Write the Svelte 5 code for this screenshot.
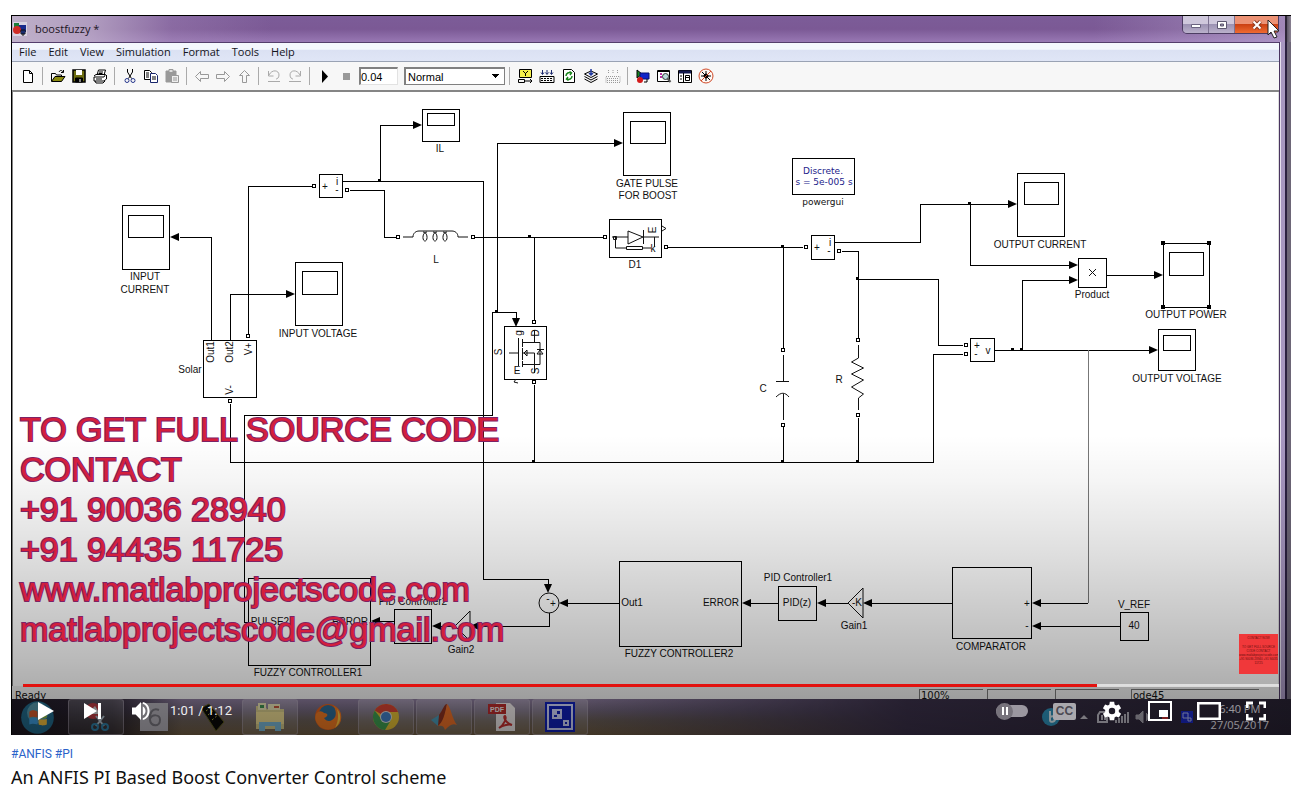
<script>
  let played = 85.5;
  let stopTime = '0.04';
  let mode = 'Normal';

  const MENUS = ['File', 'Edit', 'View', 'Simulation', 'Format', 'Tools', 'Help'];

  const CONTACT = [
    'TO GET FULL SOURCE CODE',
    'CONTACT',
    '+91 90036 28940',
    '+91 94435 11725',
    'www.matlabprojectscode.com',
    'matlabprojectscode@gmail.com',
  ];

  // Toolbar icons, grouped as they sit between the separators
  const FILE_TOOLS = [['new'], ['open', 'save', 'print'], ['cut', 'copy', 'paste'], ['back', 'forward', 'up'], ['undo', 'redo']];
  const BUILD_TOOLS = ['target', 'build', 'refresh', 'library', 'buildoff'];
  const VIEW_TOOLS = ['browser', 'explorer', 'model', 'debug'];

  // Scopes: outer frame, inner screen
  const SCOPES = [
    { x: 122, y: 205, w: 47, h: 64, sx: 128, sy: 215, sw: 35, sh: 22 },
    { x: 295, y: 262, w: 47, h: 63, sx: 302, sy: 271, sw: 35, sh: 23 },
    { x: 422, y: 109, w: 37, h: 32, sx: 427, sy: 113, sw: 27, sh: 12 },
    { x: 623, y: 112, w: 47, h: 63, sx: 630, sy: 121, sw: 35, sh: 22 },
    { x: 1017, y: 173, w: 47, h: 63, sx: 1024, sy: 182, sw: 34, sh: 22 },
    { x: 1163, y: 243, w: 46, h: 64, sx: 1169, sy: 252, sw: 34, sh: 23 },
    { x: 1158, y: 329, w: 37, h: 41, sx: 1163, sy: 335, sw: 27, sh: 15 },
  ];

  const BLOCKS = [
    [203, 340, 53, 57], [319, 174, 23, 23], [504, 326, 42, 53], [609, 219, 52, 38],
    [792, 158, 62, 36], [811, 235, 23, 24], [970, 338, 24, 23], [1078, 258, 28, 29],
    [248, 578, 122, 87], [394, 609, 37, 34], [619, 561, 122, 85], [778, 586, 38, 34],
    [952, 567, 79, 71], [1120, 612, 28, 28],
  ];

  const WIRES = [
    'M180 237H211V340', 'M230 340V294H286', 'M248 334V186H312', 'M343 181H483V579H548V584',
    'M380 181V125H413', 'M350 190H384V237H396', 'M475 237H603', 'M534 237V320',
    'M614 143H497V312M516 318V312H492V415H244V622H248', 'M534 385V462', 'M230 404V462H933V354H963',
    'M668 247H803', 'M783 247V348M783 427V462', 'M835 242H920V204H1008M970 204V265H1070',
    'M842 251H858V338M858 279H938V345H963M858 418V462', 'M995 350H1150M1022 350V280H1070',
    'M1107 275H1154', 'M1088 603H1040', 'M1120 626H1040', 'M952 603H871', 'M848 603H825',
    'M778 603H750', 'M619 603H567', 'M549 613V626H478', 'M455 626H440', 'M394 621H380',
  ];

  // [x, y, direction in degrees], tip at x,y
  const ARROWS = [
    [170, 237, 180], [295, 294, 0], [422, 125, 0], [623, 143, 0], [516, 327, 90], [1017, 204, 0],
    [1078, 265, 0], [1078, 280, 0], [1163, 275, 0], [1158, 350, 0], [1032, 603, 180], [1032, 626, 180],
    [863, 603, 180], [817, 603, 180], [742, 603, 180], [559, 603, 180], [548, 593, 90],
    [470, 626, 180], [432, 626, 180], [371, 621, 180],
  ];

  const PORTS = [
    [248, 336], [314, 186], [347, 190], [398, 237], [473, 237], [605, 237], [534, 322], [534, 382],
    [230, 401], [666, 247], [806, 247], [839, 251], [783, 350], [783, 425], [858, 340], [858, 415],
    [966, 345], [966, 354],
  ];

  const NODES = [
    [380, 181], [530, 237], [497, 312], [534, 462], [783, 247], [783, 462], [858, 279], [858, 462],
    [970, 204], [1013, 350], [1022, 350],
  ];

  // selection handles round the OUTPUT POWER scope
  const HANDLES = [[1163, 243], [1209, 243], [1163, 307], [1209, 307]];

  const LABELS = [
    [145, 280, 'INPUT'], [145, 293, 'CURRENT'], [318, 337, 'INPUT VOLTAGE'], [440, 152, 'IL'],
    [647, 187, 'GATE PULSE'], [648, 199, 'FOR BOOST'], [1040, 248, 'OUTPUT CURRENT'],
    [1186, 318, 'OUTPUT POWER'], [1177, 382, 'OUTPUT VOLTAGE'], [1092, 298, 'Product'],
    [190, 373, 'Solar'], [635, 268, 'D1'], [436, 263, 'L'], [763, 392, 'C'], [839, 383, 'R'],
    [308, 676, 'FUZZY CONTROLLER1'], [679, 657, 'FUZZY CONTROLLER2'], [413, 605, 'PID Controller2'],
    [798, 581, 'PID Controller1'], [461, 653, 'Gain2'], [854, 629, 'Gain1'], [991, 650, 'COMPARATOR'],
    [1134, 608, 'V_REF'], [1134, 629, '40'], [270, 625, 'PULSE2'], [350, 625, 'ERROR'],
    [632, 606, 'Out1'], [721, 606, 'ERROR'], [797, 606, 'PID(z)'], [325, 190, '+'], [337, 185, 'i'],
    [337, 193, '-'], [817, 251, '+'], [830, 246, 'i'], [829, 254, '-'], [977, 349, '+'], [976, 357, '-'],
    [988, 354, 'v'], [1027, 607, '+'], [1027, 629, '-'], [653, 252, 'k'], [553, 607, '+'], [548, 602, '-'],
    [857, 606, '-K'],
  ];
</script>

{#snippet toolIcon(id)}
  <svg width="16" height="16" viewBox="0 0 16 16" fill="none" stroke="#000" aria-hidden="true">
    {#if id === 'new'}
      <path d="M3.500 2.500h6l3 3v9h-9zM9.500 2.500v3h3" fill="#fff" />
    {:else if id === 'open'}
      <path d="M1.500 13V5.500h4l1 1.500h5v2M9 4c1-2 3-2 4 0M13.500 2v2.500h-2.500" />
      <path d="M1.500 13.500L5 8.500h10l-3.500 5z" fill="#8a8a10" />
    {:else if id === 'save'}
      <path d="M2 2h12v12H2z" fill="#6e6e10" stroke-width="1.500" /><path d="M5 2h6v5H5z" fill="#fff" stroke="none" /><path d="M4.500 10h7v4h-7z" fill="#000" /><path d="M9 11v3" stroke="#fff" />
    {:else if id === 'print'}
      <path d="M5 7l1.500-5h7L12 7M2 8l2-1.500h9.500L12 9H2v4h10l2.500-2V7M3 13l1 2h7l2-2" fill="#fff" /><path d="M7 4h4M6.500 5.500h4M4 11h6" />
    {:else if id === 'cut'}
      <path d="M5.500 1v3l4 6.500M10.500 1v3l-4 6.500" /><circle cx="5" cy="12.500" r="2" stroke="#26368c" /><circle cx="11" cy="12.500" r="2" stroke="#26368c" />
    {:else if id === 'copy'}
      <path d="M1.500 2.500h5l2 2v7h-7z" fill="#fff" /><path d="M7.500 5.500h5l2 2v7h-7z" fill="#fff" stroke="#17256b" /><path d="M3 5h3M3 7h3M3 9h3M9 9h4M9 11h4" />
    {:else if id === 'paste'}
      <path d="M2 3h10v11H2z" fill="#999" stroke="#999" /><path d="M5 1.500h4v3H5z" fill="#ddd" stroke="#999" /><path d="M7.500 7.500h7v7h-7zM9 10h4M9 12h4" fill="#eee" stroke="#999" />
    {:else if id === 'back'}
      <path d="M1.500 8.500l5-5v3h8v4h-8v3z" stroke="#999" />
    {:else if id === 'forward'}
      <path d="M14.500 8.500l-5-5v3h-8v4h8v3z" stroke="#999" />
    {:else if id === 'up'}
      <path d="M8.500 2.500l-5 5h3v7h4v-7h3z" stroke="#999" />
    {:else if id === 'undo'}
      <path d="M2.500 3v5h5M3 7c3-6 10-5 10 0 0 3-2 4-3 4M2 13.500h12" stroke="#aaa" />
    {:else if id === 'redo'}
      <path d="M13.500 3v5h-5M13 7C10 1 3 2 3 7c0 3 2 4 3 4M2 13.500h12" stroke="#aaa" />
    {:else if id === 'play'}
      <path d="M5 2l6 6.500L5 15z" fill="#000" stroke="none" />
    {:else if id === 'stop'}
      <path d="M5 5h7v7H5z" fill="#999" stroke="none" />
    {:else if id === 'target'}
      <path d="M2.500 1.500h12v8h-12z" fill="#f5f04c" /><path d="M6 3l2.500 2.500L11 3M8.500 5v3M1.500 11.500h6v3h-6zM8 13h7M13 11l2 2-2 2" />
    {:else if id === 'build'}
      <path d="M3.500 2v4M8 2v4M12.500 2v4M2 4.500l1.500 2L5 4.500M6.500 4.500L8 6.500l1.500-2M11 4.500l1.500 2 1.500-2" stroke="#1c2a6e" /><path d="M1 8.500h14v6H1z" stroke-width="1" /><path d="M2 10.500h12M2 12.500h12" stroke-dasharray="2 1" />
    {:else if id === 'buildoff'}
      <path d="M3.500 2v4M8 2v4M12.500 2v4M1 8.500h14v6H1zM2 10.500h12M2 12.500h12" stroke="#999" stroke-dasharray="1 1" />
    {:else if id === 'refresh'}
      <path d="M2.500 1.500h8l3 3v10h-11z" fill="#fff" /><path d="M5 8c0-3 3-4 5-3M8.500 3.500L10.500 5 9 7M11 8c0 3-3 4-5 3M7.500 12.500L5.500 11 7 9" stroke="#18851b" stroke-width="1.500" />
    {:else if id === 'library'}
      <path d="M1.500 6L8 9.500 14.500 6 8 3zM1.500 8.500L8 12l6.500-3.500M1.500 11L8 14.500l6.500-3.500" /><path d="M8 1v6M6 5l2 2 2-2" stroke="#2039a0" stroke-width="1.500" />
    {:else if id === 'browser'}
      <path d="M2 2l5 4-5 4z" fill="#16861f" stroke="#000" /><path d="M5 5h9v6H5z" fill="#1024c8" stroke="#061070" /><circle cx="5" cy="12" r="3" fill="#d41a1a" stroke="none" /><path d="M9 14h3v-3" />
    {:else if id === 'explorer'}
      <path d="M1.500 2.500h12v11h-12z" fill="#fff" /><path d="M2 3.500h12" stroke-width="1" /><path d="M4 6h2M4 9h2" stroke="#b52fa0" stroke-width="2" /><circle cx="9.500" cy="8.500" r="3" fill="#b9d8da" stroke="#333" /><path d="M11.500 10.500l3 3.500" stroke="#555" stroke-width="2" />
    {:else if id === 'model'}
      <path d="M1.500 2.500h13v12h-13z" fill="#fff" /><path d="M2 4h12" stroke="#13194f" stroke-width="3" /><path d="M6.500 5v9M3 8h2M3 11h2M8.500 7.500h4v5h-4zM9 9.500h3" />
    {:else if id === 'debug'}
      <circle cx="8" cy="8" r="7" stroke="#d04a28" fill="#fff8f4" /><path d="M8 3v10M3 8h10M4 4l8 8M12 4l-8 8" /><circle cx="8" cy="8" r="2" fill="#000" /><path d="M3 13L13 3" stroke="#d04a28" />
    {/if}
  </svg>
{/snippet}

{#snippet tool(id)}
  <button class="tool" aria-label={id}>{@render toolIcon(id)}</button>
{/snippet}

<main class="page">
  <section class="player">
    <header class="titlebar">
      <svg width="14" height="14" viewBox="0 0 14 14" aria-hidden="true">
        <path d="M0 0h14v14H0z" fill="#d9d3e2" /><path d="M1 1h5v6H1z" fill="#1d7d3a" /><path d="M6 3h7v7H6z" fill="#182a8c" /><circle cx="4" cy="8" r="4" fill="#cf2b25" /><path d="M8 12V8h4v4zM10 8v6" fill="#2148c8" stroke="#111" />
      </svg>
      <span class="doc">boostfuzzy *</span>
      <div class="winbtns">
        <button aria-label="Minimize"><svg width="12" height="10" viewBox="0 0 12 10"><path d="M1.500 4.500h9v3h-9z" fill="#fff" stroke="#6b6480" /></svg></button>
        <button aria-label="Restore"><svg width="12" height="10" viewBox="0 0 12 10"><path d="M1.500 1.500h9v7h-9z" fill="#fff" stroke="#5d5770" /><path d="M4.500 4h3v2h-3z" fill="#9a93ab" stroke="#5d5770" /></svg></button>
        <button class="close" aria-label="Close"><svg width="12" height="10" viewBox="0 0 12 10"><path d="M2.500 1.500l7 7M9.500 1.500l-7 7" stroke="#8c3b22" stroke-width="4" /><path d="M2.500 1.500l7 7M9.500 1.500l-7 7" stroke="#fff" stroke-width="2" /></svg></button>
      </div>
    </header>

    <div class="window">
      <nav class="menubar">
        {#each MENUS as m}<button>{m}</button>{/each}
      </nav>

      <div class="toolbar">
        {#each FILE_TOOLS as group}
          {#each group as id}{@render tool(id)}{/each}
          <i class="sep"></i>
        {/each}
        {@render tool('play')}
        {@render tool('stop')}
        <input class="stoptime" aria-label="Stop time" bind:value={stopTime} />
        <select class="mode" aria-label="Simulation mode" bind:value={mode}>
          <option>Normal</option>
          <option>Accelerator</option>
        </select>
        <i class="sep"></i>
        <div class="loose">{#each BUILD_TOOLS as id}{@render tool(id)}{/each}</div>
        <i class="sep"></i>
        {#each VIEW_TOOLS as id}{@render tool(id)}{/each}
      </div>

      <div class="canvas">
        <svg class="model" viewBox="13 92 1265 594" role="img" aria-label="boostfuzzy model">
          <g class="lines">
            {#each WIRES as d}<path {d} />{/each}
            <path class="faint" d="M1088 350V603" />
            {#each BLOCKS as [x, y, w, h]}<rect {x} {y} width={w} height={h} />{/each}
            {#each SCOPES as s}
              <rect x={s.x} y={s.y} width={s.w} height={s.h} />
              <rect x={s.sx} y={s.sy} width={s.sw} height={s.sh} />
            {/each}
            {#each PORTS as [x, y]}<rect class="port" x={x - 2} y={y - 2} width="3" height="3" />{/each}
          </g>
          {#each NODES as [x, y]}<rect x={x - 2} y={y - 2} width="3" height="3" />{/each}
          {#each HANDLES as [x, y]}<rect x={x - 2} y={y - 2} width="4" height="4" />{/each}
          {#each ARROWS as [x, y, a]}
            <path d="M0 0L-9 -4V4Z" transform="translate({x} {y}) rotate({a})" />
          {/each}

          <g class="symbols">
            <!-- inductor -->
            <path d="M403 237h10c0-4 3-6 6-6h33c3 0 6 2 6 6h10M423 232c5 0 5 9 2 9s-3-9 2-9M433 232c5 0 5 9 2 9s-3-9 2-9M443 232c5 0 5 9 2 9s-3-9 2-9" />
            <!-- diode with snubber -->
            <path d="M612 237h16M644 237h15M628 231v13l15-7zM643.500 230v14M615.500 237v11h11M643 248h8M654.500 237v10M626.500 246.500h16v3h-16zM613.500 236.500h3v3h-3zM662 226l4 2.500-4 2.500" />
            <!-- mosfet -->
            <path d="M509 353h10M518.500 338v28M522.500 339v8M522.500 348v12M522.500 361v6M523 342.500h17v22h-17M534.500 330v12M523 353h11.500v20M524 353l3-3v6zM537 354l3-4 3 4zM537 349.500h7M516 379l-2 3 4 1" />
            <!-- capacitor -->
            <path d="M783.500 355v26M776 381.500h13M776 397c5-5 9-5 13 0M783.500 394v26" />
            <!-- resistor -->
            <path d="M858.500 345v13l-7 4 12 6-12 6 12 6-12 7 12 7-5 4v12" />
            <!-- product -->
            <path d="M1089 269l7 7M1096 269l-7 7" />
            <circle cx="549" cy="603" r="10" />
            <path d="M848 603l15-15v30zM455 626l15-15v30z" />
          </g>

          <g class="labels">
            {#each LABELS as [x, y, text]}<text {x} {y}>{text}</text>{/each}
            <text transform="translate(214 352) rotate(-90)">Out1</text>
            <text transform="translate(233 352) rotate(-90)">Out2</text>
            <text transform="translate(252 349) rotate(-90)">V+</text>
            <text transform="translate(233 390) rotate(-90)">V-</text>
            <text transform="translate(656 230) rotate(-90)">E</text>
            <text transform="translate(502 352) rotate(-90)">S</text>
            <text transform="translate(522 333) rotate(-90)">g</text>
            <text transform="translate(539 333) rotate(-90)">D</text>
            <text transform="translate(539 371) rotate(-90)">S</text>
            <text x="517" y="374">E</text>
          </g>
          <g class="gui">
            <text x="823" y="174">Discrete.</text>
            <text x="824" y="185">s = 5e-005 s</text>
            <text class="name" x="823" y="205">powergui</text>
          </g>
        </svg>
      </div>

      <footer class="status">
        <span class="ready">Ready</span>
        <span class="cell">100%</span>
        <span class="cell"></span>
        <span class="cell"></span>
        <span class="cell solver">ode45</span>
      </footer>
    </div>

    <div class="taskbar">
      <svg class="orb" width="35" height="35" viewBox="0 0 30 30" aria-hidden="true">
        <circle cx="15" cy="15" r="14" fill="#226a8b" /><circle cx="15" cy="11" r="9" fill="#5595a8" /><path d="M8 10c3-2 5-1 7 0v5c-3-1-5-1-7 0z" fill="#d3582b" /><path d="M16 10c3 1 4 1 7 0v5c-3 1-4 1-7 0z" fill="#86b544" /><path d="M8 16c3-1 5-1 7 0v5c-3-1-5-1-7 0z" fill="#3d9bdb" /><path d="M16 16c3 1 4 1 7 0v5c-3 1-4 1-7 0z" fill="#eebc3d" />
      </svg>
      <div class="task framed">
        <svg width="28" height="32" viewBox="0 0 28 30"><circle cx="11" cy="9" r="8" fill="#b83a40" /><path d="M5 12l8-8 5 8z" fill="#ccc" /><path d="M14 14l8 10M22 14l-8 10" stroke="#aebfca" stroke-width="2" /><circle cx="13" cy="25" r="3" fill="none" stroke="#2f7fa6" stroke-width="2" /><circle cx="23" cy="25" r="3" fill="none" stroke="#2f7fa6" stroke-width="2" /></svg>
      </div>
      <div class="task">
        <svg width="28" height="30" viewBox="0 0 28 30"><path d="M0 1h28v28H0z" fill="#b3b0b8" /><path d="M19 8c-7-3-10 4-9 10 1 7 10 7 10 0 0-6-8-6-10-1" fill="none" stroke="#77757d" stroke-width="2" /></svg>
      </div>
      <div class="task">
        <svg width="28" height="30" viewBox="0 0 28 30"><path d="M3 6l8-4 15 18-8 9z" fill="#0a0a08" stroke="#5e5c1c" /><path d="M8 9l4-3M10 13l6-5M14 18l6-5" stroke="#b0a82f" stroke-dasharray="2 2" /></svg>
      </div>
      <div class="task framed">
        <svg width="32" height="32" viewBox="0 0 32 32"><path d="M2 5h9l2 3h17v20H2z" fill="#d4c98a" /><path d="M4 2h8v7H4zM14 3h12v6H14z" fill="#e6e1b3" /><path d="M6 4h4v3H6z" fill="#3f9150" /><path d="M20 5h5v2h-5z" fill="#c25339" /><path d="M2 11h28v12H2z" fill="#ecdb92" /><path d="M5 30V21h22v9h-6v-5H11v5z" fill="#7ab8d6" /></svg>
      </div>
      <div class="task">
        <svg width="30" height="30" viewBox="0 0 30 30"><circle cx="15" cy="15" r="13" fill="#e0611d" /><circle cx="15" cy="12" r="9" fill="#2d6b94" /><path d="M3 12c3-4 6-3 8-1 5 0 4 4 0 5 3 5 9 3 11-1 2-4 0-9-2-12 8 4 10 11 7 18-5 8-18 9-23 0-2-3-2-6-1-9z" fill="#f07a22" /><path d="M24 7c5 6 4 14-2 19 3-6 4-12 2-19z" fill="#fbc940" /></svg>
      </div>
      <div class="task framed">
        <svg width="30" height="30" viewBox="0 0 30 30"><circle cx="15" cy="15" r="13" fill="#e3be35" /><path d="M15 15L3.700 8.500A13 13 0 0 1 27 10H15z" fill="#d64334" /><path d="M3.700 8.500A13 13 0 0 0 14 28l6-10-9 0z" fill="#3f9e51" /><circle cx="15" cy="15" r="6" fill="#ddd" /><circle cx="15" cy="15" r="5" fill="#427fc6" /></svg>
      </div>
      <div class="task framed">
        <svg width="30" height="30" viewBox="0 0 30 30"><path d="M2 18l8-5 5 5-6 6z" fill="#4b9cb9" /><path d="M10 13C14 8 15 2 18 2l-3 18-6 4z" fill="#8c3220" /><path d="M18 2c4 3 5 15 10 21-5-2-7 0-12 5-1-4-3-5-7-4 5-4 7-12 9-22z" fill="#ec7028" /></svg>
      </div>
      <div class="task framed">
        <svg width="30" height="32" viewBox="0 0 30 32"><path d="M9 2h14l5 5v23H9z" fill="#eee9e9" /><path d="M1 3h18v10H1z" fill="#b92c2c" /><text class="pdf" x="10" y="11">PDF</text><path d="M12 27c5-3 8-10 6-12-2 0 0 7 7 9-3-1-9 0-13 3z" fill="none" stroke="#c43030" stroke-width="2" /></svg>
      </div>
      <div class="task framed">
        <svg width="30" height="32" viewBox="0 0 30 32"><path d="M0 1h30v30H0z" fill="#1020b8" /><path d="M3 4h24v24H3z" fill="none" stroke="#d0d5fa" stroke-width="2" /><path d="M7 8h10v10H7zM18 19h6v6h-6z" fill="#d0d5fa" /><path d="M12 10h3v3h-3zM9 14h3v2H9zM20 21h2v2h-2z" fill="#1020b8" /></svg>
      </div>
      <div class="tray">
        <svg width="20" height="22" viewBox="0 0 20 22"><circle cx="10" cy="11" r="9" fill="#2f92bb" /><path d="M9 5v9c0 3 5 2 5-1 0-4-5-3-5-1" fill="none" stroke="#dcebf2" stroke-width="2" /></svg>
        <svg class="caret" width="10" height="6" viewBox="0 0 10 6"><path d="M1 5l4-4 4 4z" fill="#c5c2cb" /></svg>
        <svg width="12" height="14" viewBox="0 0 12 14"><path d="M3 2h7v10H1V5zM5 5v5M8 4v6" fill="none" stroke="#c0bdc8" stroke-width="2" /></svg>
        <svg width="14" height="12" viewBox="0 0 14 12"><path d="M1 9v3M4 7v5M7 5v7M10 3v9M13 1v11" stroke="#b5b2bd" stroke-width="2" /></svg>
        <svg width="40" height="14" viewBox="0 0 40 14"><path d="M1 5h3l4-4v12L4 9H1zM11 3c3 3 3 5 0 8" fill="#a5a2ad" stroke="#a5a2ad" /><path d="M27 3h6v8h-6" fill="#c93336" /></svg>
        <svg width="12" height="12" viewBox="0 0 12 12"><path d="M0 0h12v12H0z" fill="#1a28c4" /><path d="M2 2h5v5H2zM7 7h3v3H7z" fill="none" stroke="#b0b8f0" /></svg>
        <div class="clock"><span>6:40 PM</span><span>27/05/2017</span></div>
      </div>
    </div>

    <div class="shade"></div>

    <div class="contact">
      {#each CONTACT as line}<p>{line}</p>{/each}
    </div>

    <div class="card">
      <p>CONTACT NOW</p>
      <p>TO GET FULL SOURCE CODE CONTACT</p>
      <p>www.matlabprojectscode.com</p>
      <p>+91 90036 28940 +91 94435 11725</p>
    </div>

    <div class="controls">
      <input class="seek" type="range" min="0" max="100" step="0.5" aria-label="Seek" bind:value={played} style="--played:{played}%" />
      <div class="row">
        <button class="play" aria-label="Play"><svg width="18" height="20" viewBox="0 0 18 20"><path d="M1 1l16 9-16 9z" /></svg></button>
        <button class="next" aria-label="Next"><svg width="18" height="18" viewBox="0 0 18 18"><path d="M0 1l13 8-13 8zM14 1h3v16h-3z" /></svg></button>
        <button class="vol" aria-label="Mute"><svg width="20" height="18" viewBox="0 0 20 20"><path d="M0 6h4l6-6v20l-6-6H0zM12 5c4 2 4 8 0 10zM12 0c10 2 10 18 0 20v-2c7-2 7-14 0-16z" /></svg></button>
        <span class="time">1:01 / 1:12</span>
        <div class="right">
          <button class="auto" aria-label="Autoplay"><span class="knob"></span></button>
          <button class="cc" aria-label="Subtitles">CC</button>
          <button aria-label="Settings"><svg width="22" height="22" viewBox="0 0 24 24"><path fill-rule="evenodd" d="M19.400 13c.1-.7.1-1.300 0-2l2.500-2-2.400-4.200-3 1.200-1.700-1L14.400 2H9.600l-.4 3-1.700 1-3-1.200L2.100 9l2.500 2c-.1.700-.1 1.300 0 2l-2.500 2 2.400 4.200 3-1.200 1.700 1 .4 3h4.800l.4-3 1.700-1 3 1.200 2.400-4.200zM12 15.500a3.500 3.500 0 1 1 0-7 3.500 3.500 0 0 1 0 7z" /></svg></button>
          <button aria-label="Miniplayer"><svg width="24" height="20" viewBox="0 0 24 20"><path d="M1 1h22v18H1z" fill="none" stroke="#fff" stroke-width="2" /><path d="M11 9h9v7h-9z" /></svg></button>
          <button aria-label="Theater mode"><svg width="24" height="18" viewBox="0 0 24 18"><path d="M1 1h22v16H1z" fill="none" stroke="#fff" stroke-width="3" /></svg></button>
          <button aria-label="Full screen"><svg width="20" height="20" viewBox="0 0 20 20"><path d="M1 7V2h6M13 2h6v5M19 13v5h-6M7 18H1v-5" fill="none" stroke="#fff" stroke-width="3" /></svg></button>
        </div>
      </div>
    </div>

    <svg class="cursor" width="13" height="20" viewBox="0 0 13 20" aria-hidden="true"><path d="M1 1v15l3-3 3 6 3-1-3-6h5z" fill="#fff" stroke="#222" /></svg>
  </section>

  <p class="tags"><a href="#anfis">#ANFIS</a> <a href="#pi">#PI</a></p>
  <h1>An ANFIS PI Based Boost Converter Control scheme</h1>
</main>

<style>
  :global(body) { margin: 0; background: #fff; }
  .page { padding: 15px 10px 0 11px; font-family: Roboto, "Liberation Sans", sans-serif; }
  p, h1 { margin: 0; }
  button { border: 0; padding: 0; background: none; font: inherit; color: inherit; }
  svg { display: block; }

  .player {
    position: relative; overflow: hidden;
    border-top: 1px solid #000; border-left: 1px solid #000; box-sizing: border-box;
    background: linear-gradient(90deg, #5c5666, #8b8394) right / 4px 100% no-repeat #2d2638;
  }

  .titlebar {
    display: flex; align-items: center; height: 26px; margin-right: 6px; padding-left: 1px;
    background:
      linear-gradient(90deg, #c3b6ccee 0, #bdacc9cc 80px, #a88cbb55 160px, transparent 260px),
      linear-gradient(90deg, transparent 85%, #b9a6cf99 100%),
      linear-gradient(#7c5c98, #7b5995 50%, #9878b4);
    font: 11px/16px "Open Sans", "Noto Sans", sans-serif; color: #1c1524;
  }
  .doc { margin-left: 8px; }
  .winbtns { display: flex; align-self: flex-start; margin-left: auto; margin-right: 6px; border: 1px solid #4d3d63; border-top: 0; border-radius: 0 0 5px 5px; overflow: hidden; }
  .winbtns button { display: grid; place-items: center; width: 26px; height: 17px; background: linear-gradient(#cfc8dc 50%, #9c92b3 50%, #bab1cb); border-right: 1px solid #7d7292; }
  .winbtns .close { width: 43px; background: linear-gradient(#ec9275 45%, #c83d10 45%, #ef6b32); border-right: 0; }

  .window {
    padding-right: 12px;
    background: linear-gradient(90deg, #4a3560 0 1px, #e6e0ee 1px 2px, #a797c0 2px 6px, #2b2040 6px 8px, #6d6677 8px) right / 12px 100% no-repeat;
  }
  .menubar {
    display: flex; align-items: center; gap: 12px; height: 18px; padding-left: 7px;
    border-top: 1px solid #543e6c; border-bottom: 1px solid #9aa3b4;
    background: linear-gradient(#f4f7fd 35%, #dbe1f3 40%, #e0e6f6);
    font: 11px/16px "Open Sans", "Noto Sans", sans-serif; color: #14141c;
  }
  .toolbar { display: flex; align-items: center; height: 28px; padding-left: 5px; background: #f7f7f7; border-bottom: 2px solid #858585; }
  .tool { display: grid; place-items: center; width: 21px; height: 22px; flex: none; }
  .sep { width: 1px; height: 18px; margin: 0 4px; background: #aaa; flex: none; }
  .loose { display: flex; gap: 1px; }
  .stoptime, .mode { box-sizing: border-box; height: 18px; border: 1px solid #e2e2e2; border-top: 2px solid #808080; border-left: 2px solid #808080; border-radius: 0; background: #fff; font: 11px/14px "Liberation Sans", sans-serif; color: #000; }
  .stoptime { width: 39px; margin: 0 6px 0 3px; padding: 0; }
  .mode {
    width: 101px; padding: 0 2px; appearance: none; border-color: #808080;
    background: linear-gradient(#000, #000) right 5px top 5px / 7px 1px no-repeat, linear-gradient(#000, #000) right 6px top 6px / 5px 1px no-repeat, linear-gradient(#000, #000) right 7px top 7px / 3px 1px no-repeat, linear-gradient(#000, #000) right 8px top 8px / 1px 1px no-repeat, #fff;
  }

  .canvas { border-left: 1px solid #858585; border-right: 1px solid #ddd; background: #fff; }
  .model { width: 100%; height: auto; }
  .lines { fill: none; stroke: #000; shape-rendering: crispEdges; }
  .faint { stroke: #777; }
  .port { fill: #fff; }
  .symbols { fill: none; stroke: #111; }
  .labels, .gui { text-anchor: middle; fill: #111; font: 10px "Liberation Sans", sans-serif; }
  .gui { font: 9px "DejaVu Sans", sans-serif; fill: #23238a; }
  .name { fill: #111; }

  .status { display: flex; align-items: flex-start; gap: 4px; height: 13px; padding-right: 20px; overflow: hidden; background: #efefef; font: 10px/12px "DejaVu Sans", sans-serif; color: #111; }
  .ready { margin: 4px auto 0 3px; }
  .cell { box-sizing: border-box; width: 64px; height: 12px; margin-top: 3px; padding-left: 1px; border-top: 1px solid #777; border-left: 1px solid #777; }
  .solver { width: 128px; margin-left: 8px; }

  .taskbar {
    position: relative; display: flex; align-items: center; gap: 2px; height: 36px; padding-left: 8px;
    background: linear-gradient(90deg, #17121dee 0, #17121dcc 100px, transparent 170px), linear-gradient(90deg, transparent 45%, #3a3049 70%, #282233 100%), linear-gradient(#8a7a9b, #74687f 30%, #6b5f58 60%, #715d42);
  }
  .orb { margin-right: 11px; }
  .task { display: grid; place-items: center; box-sizing: border-box; width: 56px; height: 36px; border: 1px solid transparent; }
  .framed { border-color: #b3a9bb77; border-radius: 3px; background: linear-gradient(#ffffff33, #ffffff11); }
  .tray { display: flex; align-items: center; gap: 6px; margin-left: auto; margin-right: 22px; }
  .caret { margin: 0 2px 0 12px; }
  .clock { display: flex; flex-direction: column; align-items: center; margin-left: 12px; font: 11px/16px "Open Sans", sans-serif; color: #f0edf5; }
  .pdf { font: bold 7px "Liberation Sans", sans-serif; fill: #eee; text-anchor: middle; }

  .shade {
    position: absolute; left: 0; right: 0; bottom: 0; height: 300px; pointer-events: none;
    background: linear-gradient(transparent, rgba(0,0,0,.04) 15%, rgba(0,0,0,.13) 40%, rgba(0,0,0,.28) 76%, rgba(0,0,0,.33) 86%, rgba(0,0,0,.42));
  }
  .contact {
    position: absolute; left: 8px; bottom: 86px;
    font: 34px/40px "Liberation Sans", Arial, sans-serif; color: #d41f3c; white-space: nowrap;
    -webkit-text-stroke: 2px #7c2266; paint-order: stroke fill;
  }
  .card { position: absolute; right: 13px; bottom: 61px; box-sizing: border-box; width: 39px; height: 40px; padding: 2px 0; overflow: hidden; background: #f0383a; font: 3px/4px "Liberation Sans", sans-serif; color: #6b1010; text-align: center; }
  .card p:first-child { margin-bottom: 5px; }

  .controls { position: absolute; left: 11px; right: 12px; bottom: 0; color: #fff; }
  .seek {
    display: block; width: 100%; height: 3px; margin: 0; appearance: none;
    background: linear-gradient(90deg, #e3120f var(--played), rgba(255,255,255,.6) var(--played));
  }
  .seek::-webkit-slider-thumb { appearance: none; width: 0; height: 0; }
  .row { display: flex; align-items: center; height: 48px; padding: 0 13px 0 14px; }
  .row svg { fill: #fff; }
  .next { margin-left: 29px; }
  .vol { margin-left: 29px; }
  .time { margin-left: 19px; font-size: 13px; line-height: 16px; color: #eee; }
  .right { display: flex; align-items: center; gap: 25px; margin-left: auto; }
  .auto { display: flex; width: 32px; height: 12px; border-radius: 7px; background: #9b97a0; align-items: center; }
  .knob { box-sizing: border-box; width: 17px; height: 17px; border-radius: 50%; background: linear-gradient(90deg, #fff 2px, transparent 2px 4px, #fff 4px) center / 6px 8px no-repeat #77737c; }
  .cc { width: 23px; height: 17px; border-radius: 2px; background: #aaa8ad; color: #4b4852; font: bold 12px/17px "Liberation Sans", sans-serif; }
  .cursor { position: absolute; right: 11px; top: 3px; }

  .tags { margin-top: 11px; font-size: 12px; line-height: 16px; }
  .tags a { color: #2a62c9; text-decoration: none; }
  h1 { margin-top: 3px; font: 18px/24px "Noto Sans", "Open Sans", sans-serif; color: #0f0f0f; }
</style>
